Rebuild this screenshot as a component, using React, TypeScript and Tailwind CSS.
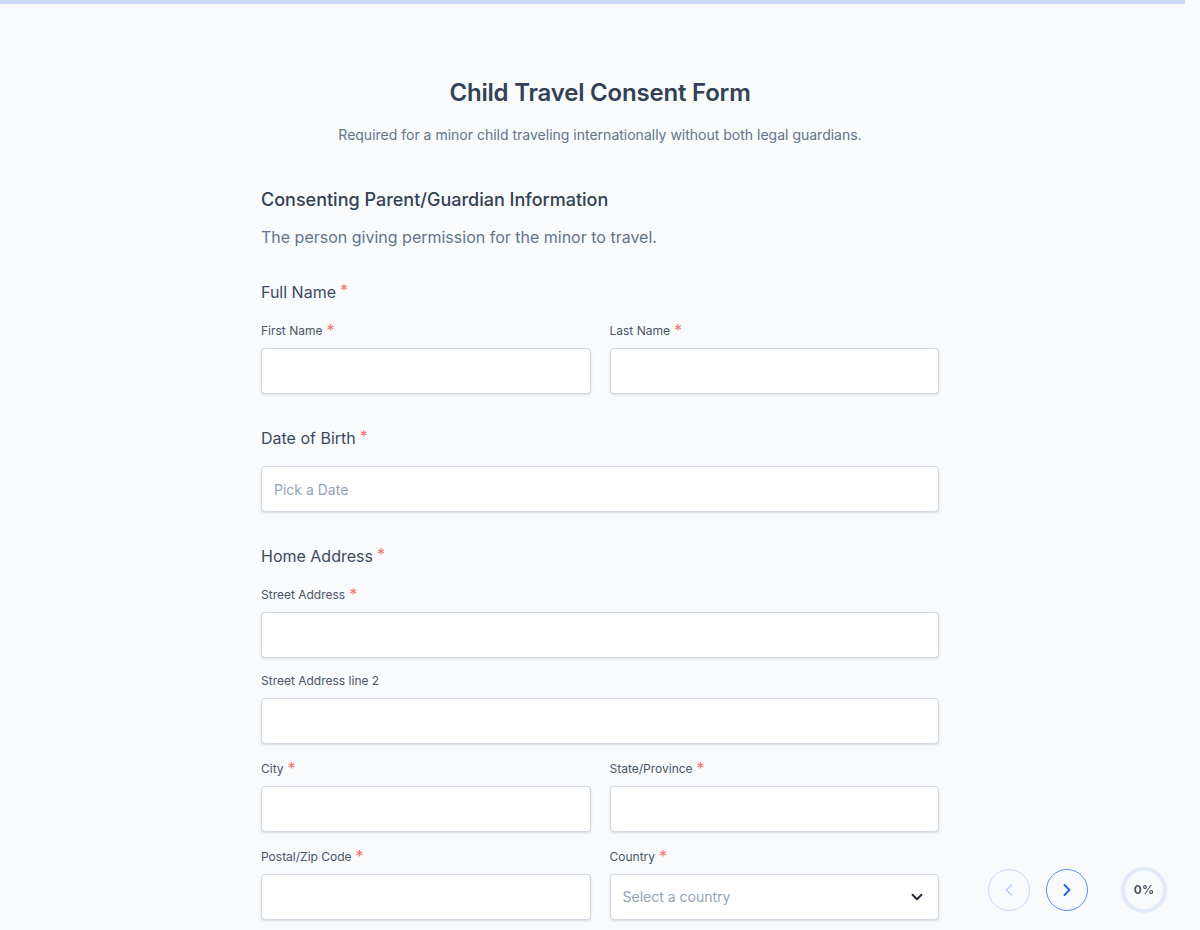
import { ChevronDown, ChevronLeft, ChevronRight } from "lucide-react";

function Req({ small = false }: { small?: boolean }) {
  return (
    <span
      className={`ml-1 text-[#f87171] relative ${small ? "inline-block h-4 align-top text-base leading-4 top-[-1px]" : "top-[-2px]"}`}
    >
      *
    </span>
  );
}

function FieldLabel({ text, required = true }: { text: string; required?: boolean }) {
  return (
    <label className="block h-4 text-xs leading-4 text-[#4a5568]">
      {text}
      {required && <Req small />}
    </label>
  );
}

function TextInput() {
  return (
    <input
      type="text"
      className="mt-[9px] block h-[46px] w-full rounded border border-[#cfd8e3] bg-white px-3 text-sm shadow-sm outline-none"
    />
  );
}

function Field({ label, required = true }: { label: string; required?: boolean }) {
  return (
    <div className="flex-1">
      <FieldLabel text={label} required={required} />
      <TextInput />
    </div>
  );
}

function GroupTitle({ text, className = "" }: { text: string; className?: string }) {
  return (
    <div className={`h-6 text-base leading-6 font-normal text-[#3c4a5e] ${className}`}>
      {text}
      <Req />
    </div>
  );
}

export default function App() {
  return (
    <div
      className="min-h-[930px] bg-[#f8fafc] text-[#334155]"
      style={{ fontFamily: "Inter, 'Noto Sans', sans-serif" }}
    >
      <div className="fixed left-0 top-0 h-1 w-[1185px] bg-[#c9d9f7]" />

      <div className="mx-auto w-[678px] pt-[77px] pb-10">
        <h1 className="text-center text-2xl leading-8 font-semibold tracking-[-0.2px] text-[#334155]">
          Child Travel Consent Form
        </h1>
        <p className="mt-4 text-center text-sm leading-5 text-[#64748b]">
          Required for a minor child traveling internationally without both legal guardians.
        </p>

        <h2 className="mt-[41px] text-lg leading-7 font-medium text-[#334155]">
          Consenting Parent/Guardian Information
        </h2>
        <p className="mt-[11px] text-base leading-6 text-[#64748b]">
          The person giving permission for the minor to travel.
        </p>

        <GroupTitle text="Full Name" className="mt-[31px]" />
        <div className="mt-[19px] flex gap-[19px]">
          <Field label="First Name" />
          <Field label="Last Name" />
        </div>

        <GroupTitle text="Date of Birth" className="mt-8" />
        <input
          type="text"
          placeholder="Pick a Date"
          className="mt-4 block h-[46px] w-full rounded border border-[#cfd8e3] bg-white px-3 text-sm shadow-sm outline-none placeholder:text-[#94a3b8]"
        />

        <GroupTitle text="Home Address" className="mt-8" />
        <div className="mt-[19px]">
          <Field label="Street Address" />
        </div>
        <div className="mt-[15px]">
          <Field label="Street Address line 2" required={false} />
        </div>
        <div className="mt-[17px] flex gap-[19px]">
          <Field label="City" />
          <Field label="State/Province" />
        </div>
        <div className="mt-[17px] flex gap-[19px]">
          <Field label="Postal/Zip Code" />
          <div className="flex-1">
            <FieldLabel text="Country" />
            <div className="mt-[9px] flex h-[46px] w-full items-center justify-between rounded border border-[#cfd8e3] bg-white pl-3 pr-3 shadow-sm">
              <span className="text-sm text-[#94a3b8]">Select a country</span>
              <ChevronDown size={18} strokeWidth={2.5} className="text-[#1f2937]" />
            </div>
          </div>
        </div>
      </div>

      <div className="fixed left-[988px] top-[867px] flex items-center">
        <button
          type="button"
          className="flex h-[42px] w-[42px] items-center justify-center rounded-full border-[1.5px] border-[#c7dafc] text-[#b8cff8]"
        >
          <ChevronLeft size={20} strokeWidth={2} />
        </button>
        <button
          type="button"
          className="ml-4 flex h-[42px] w-[42px] items-center justify-center rounded-full border-[1.5px] border-[#5b8ef2] text-[#2563eb]"
        >
          <ChevronRight size={20} strokeWidth={2.25} />
        </button>
        <div className="ml-[33px] flex h-[46px] w-[46px] items-center justify-center rounded-full border-4 border-[#e3ebfb] text-xs font-bold text-[#4b5563]">
          0%
        </div>
      </div>
    </div>
  );
}
